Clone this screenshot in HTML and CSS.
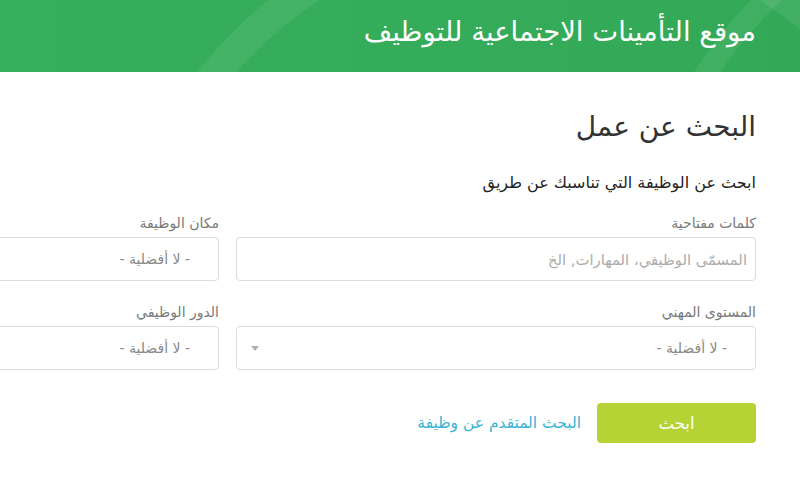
FILE: index.html
```html
<!DOCTYPE html>
<html lang="ar" dir="rtl">
<head>
<meta charset="utf-8">
<title>البحث عن عمل</title>
<link rel="stylesheet" href="styles.css">
</head>
<body>
<header class="site-header">
  <svg class="header-arcs" width="800" height="72" viewBox="0 0 800 72" aria-hidden="true">
    <circle cx="540" cy="340" r="420" fill="none" stroke="#ffffff" stroke-opacity="0.08" stroke-width="30"/>
    <circle cx="1060" cy="300" r="420" fill="none" stroke="#ffffff" stroke-opacity="0.07" stroke-width="22"/>
  </svg>
  <div class="site-title">موقع التأمينات الاجتماعية للتوظيف</div>
</header>
<main class="content">
  <h1 class="page-title">البحث عن عمل</h1>
  <p class="intro">ابحث عن الوظيفة التي تناسبك عن طريق</p>
  <form class="search-form">
    <div class="field">
      <label class="field-label">كلمات مفتاحية</label>
      <div class="control"><span class="placeholder">المسمّى الوظيفي، المهارات, الخ</span></div>
    </div>
    <div class="field">
      <label class="field-label">مكان الوظيفة</label>
      <div class="control select"><span class="value">- لا أفضلية -</span><span class="caret"></span></div>
    </div>
    <div class="field">
      <label class="field-label">المستوى المهني</label>
      <div class="control select"><span class="value">- لا أفضلية -</span><span class="caret"></span></div>
    </div>
    <div class="field">
      <label class="field-label">الدور الوظيفي</label>
      <div class="control select"><span class="value">- لا أفضلية -</span><span class="caret"></span></div>
    </div>
  </form>
  <div class="actions">
    <button class="btn-search" type="button">ابحث</button>
    <a class="advanced-link" href="#">البحث المتقدم عن وظيفة</a>
  </div>
</main>
</body>
</html>
```
FILE: styles.css
```css
html, body {
  margin: 0;
  padding: 0;
  overflow: hidden;
  background: #ffffff;
}
body {
  font-family: "DejaVu Sans", sans-serif;
  color: #333;
}
.site-header {
  position: relative;
  height: 72px;
  background: linear-gradient(90deg, #36ae5b 0%, #35ac59 50%, #33a957 100%);
  display: flex;
  align-items: center;
  padding-right: 44px;
  overflow: hidden;
}
.header-arcs {
  position: absolute;
  left: 0;
  top: 0;
}
.site-title {
  position: relative;
  color: #ffffff;
  font-size: 27.5px;
  line-height: 1;
  margin-top: -8px;
}
.content {
  padding: 35px 44px 0 0;
  width: 1056px;
}
.page-title {
  margin: 0;
  font-size: 28px;
  font-weight: normal;
  line-height: 40px;
  color: #333;
}
.intro {
  margin: 26px 0 0;
  font-size: 16px;
  line-height: 20px;
  color: #222;
}
.search-form {
  display: grid;
  grid-template-columns: 520px 520px;
  column-gap: 17px;
  row-gap: 21px;
  margin-top: 20px;
}
.field-label {
  display: block;
  font-size: 14px;
  line-height: 20px;
  color: #7a7a7a;
  margin-bottom: 4px;
}
.control {
  position: relative;
  height: 42px;
  border: 1px solid #dcdcdc;
  border-radius: 4px;
  display: flex;
  align-items: center;
  padding: 0 8px 0 12px;
  font-size: 14.8px;
  background: #fff;
}
.placeholder {
  color: #acacac;
}
.select {
  padding-right: 28px;
  font-size: 14px;
}
.select .value {
  color: #888;
  flex: 1;
}
.caret {
  width: 0;
  height: 0;
  border-left: 4px solid transparent;
  border-right: 4px solid transparent;
  border-top: 5px solid #b0b0b0;
  margin-left: 2px;
}
.actions {
  display: flex;
  align-items: center;
  gap: 16px;
  margin-top: 33px;
}
.btn-search {
  width: 159px;
  height: 40px;
  border: 0;
  border-radius: 4px;
  background: #b6d335;
  color: #fff;
  font-family: "DejaVu Sans", sans-serif;
  font-size: 16.5px;
}
.advanced-link {
  color: #3ab3d4;
  text-decoration: none;
  font-size: 15.5px;
}
```
